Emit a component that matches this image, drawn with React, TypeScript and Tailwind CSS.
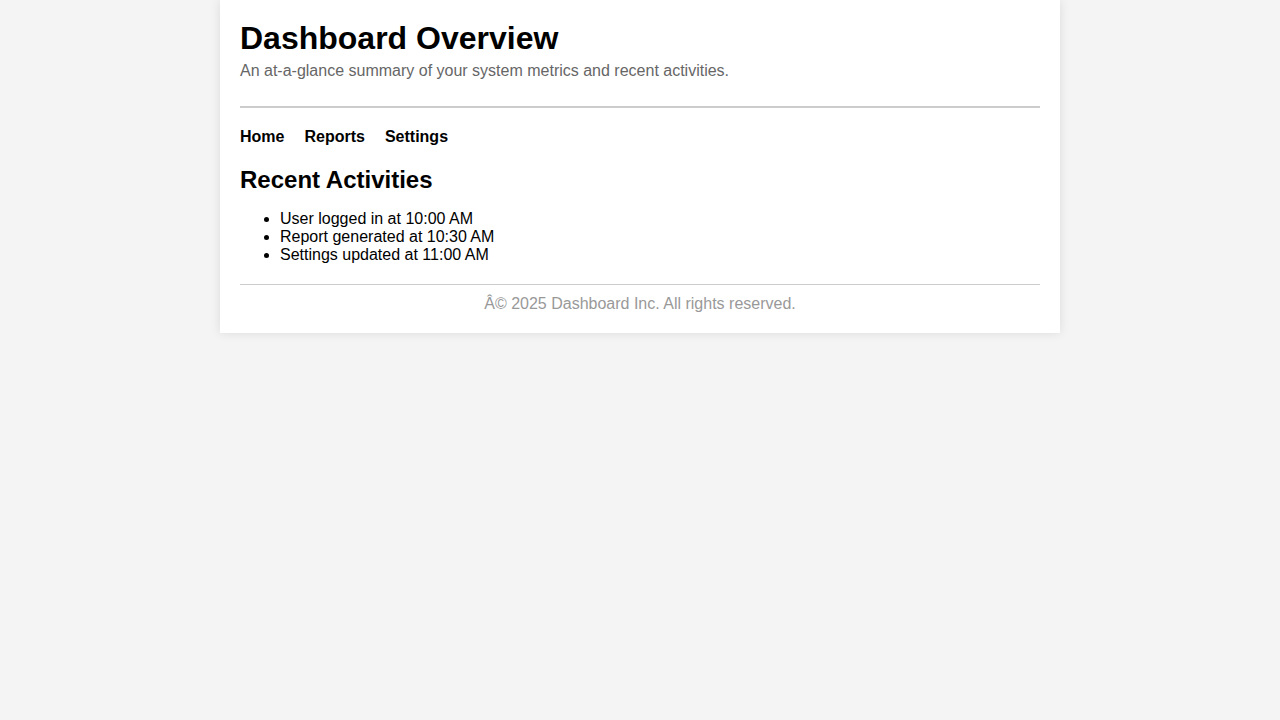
const activities = [
  "User logged in at 10:00 AM",
  "Report generated at 10:30 AM",
  "Settings updated at 11:00 AM",
];

const links = ["Home", "Reports", "Settings"];

export default function App() {
  return (
    <div className="min-h-screen bg-[#f4f4f4] font-['Liberation_Sans',Arial,sans-serif] text-base leading-[1.15]">
      <div className="mx-auto w-[840px] bg-white p-5 shadow-[0_0_10px_rgba(0,0,0,0.1)]">
        <header className="border-b-2 border-[#ccc] pb-[26px]">
          <h1 className="text-[32px] font-bold text-black">Dashboard Overview</h1>
          <p className="mt-[5px] text-[#666]">
            An at-a-glance summary of your system metrics and recent activities.
          </p>
        </header>
        <nav className="mt-5 flex">
          {links.map((l) => (
            <a key={l} href="#" className="mr-5 font-bold text-black">
              {l}
            </a>
          ))}
        </nav>
        <section className="mt-[17px]">
          <h2 className="text-2xl font-bold text-black">Recent Activities</h2>
          <ul className="mt-[14px] mb-4 list-disc pl-10">
            {activities.map((a) => (
              <li key={a}>{a}</li>
            ))}
          </ul>
        </section>
        <footer className="mt-[19px] border-t border-[#ccc] pt-[10px] text-center text-[#999]">
          Â© 2025 Dashboard Inc. All rights reserved.
        </footer>
      </div>
    </div>
  );
}
